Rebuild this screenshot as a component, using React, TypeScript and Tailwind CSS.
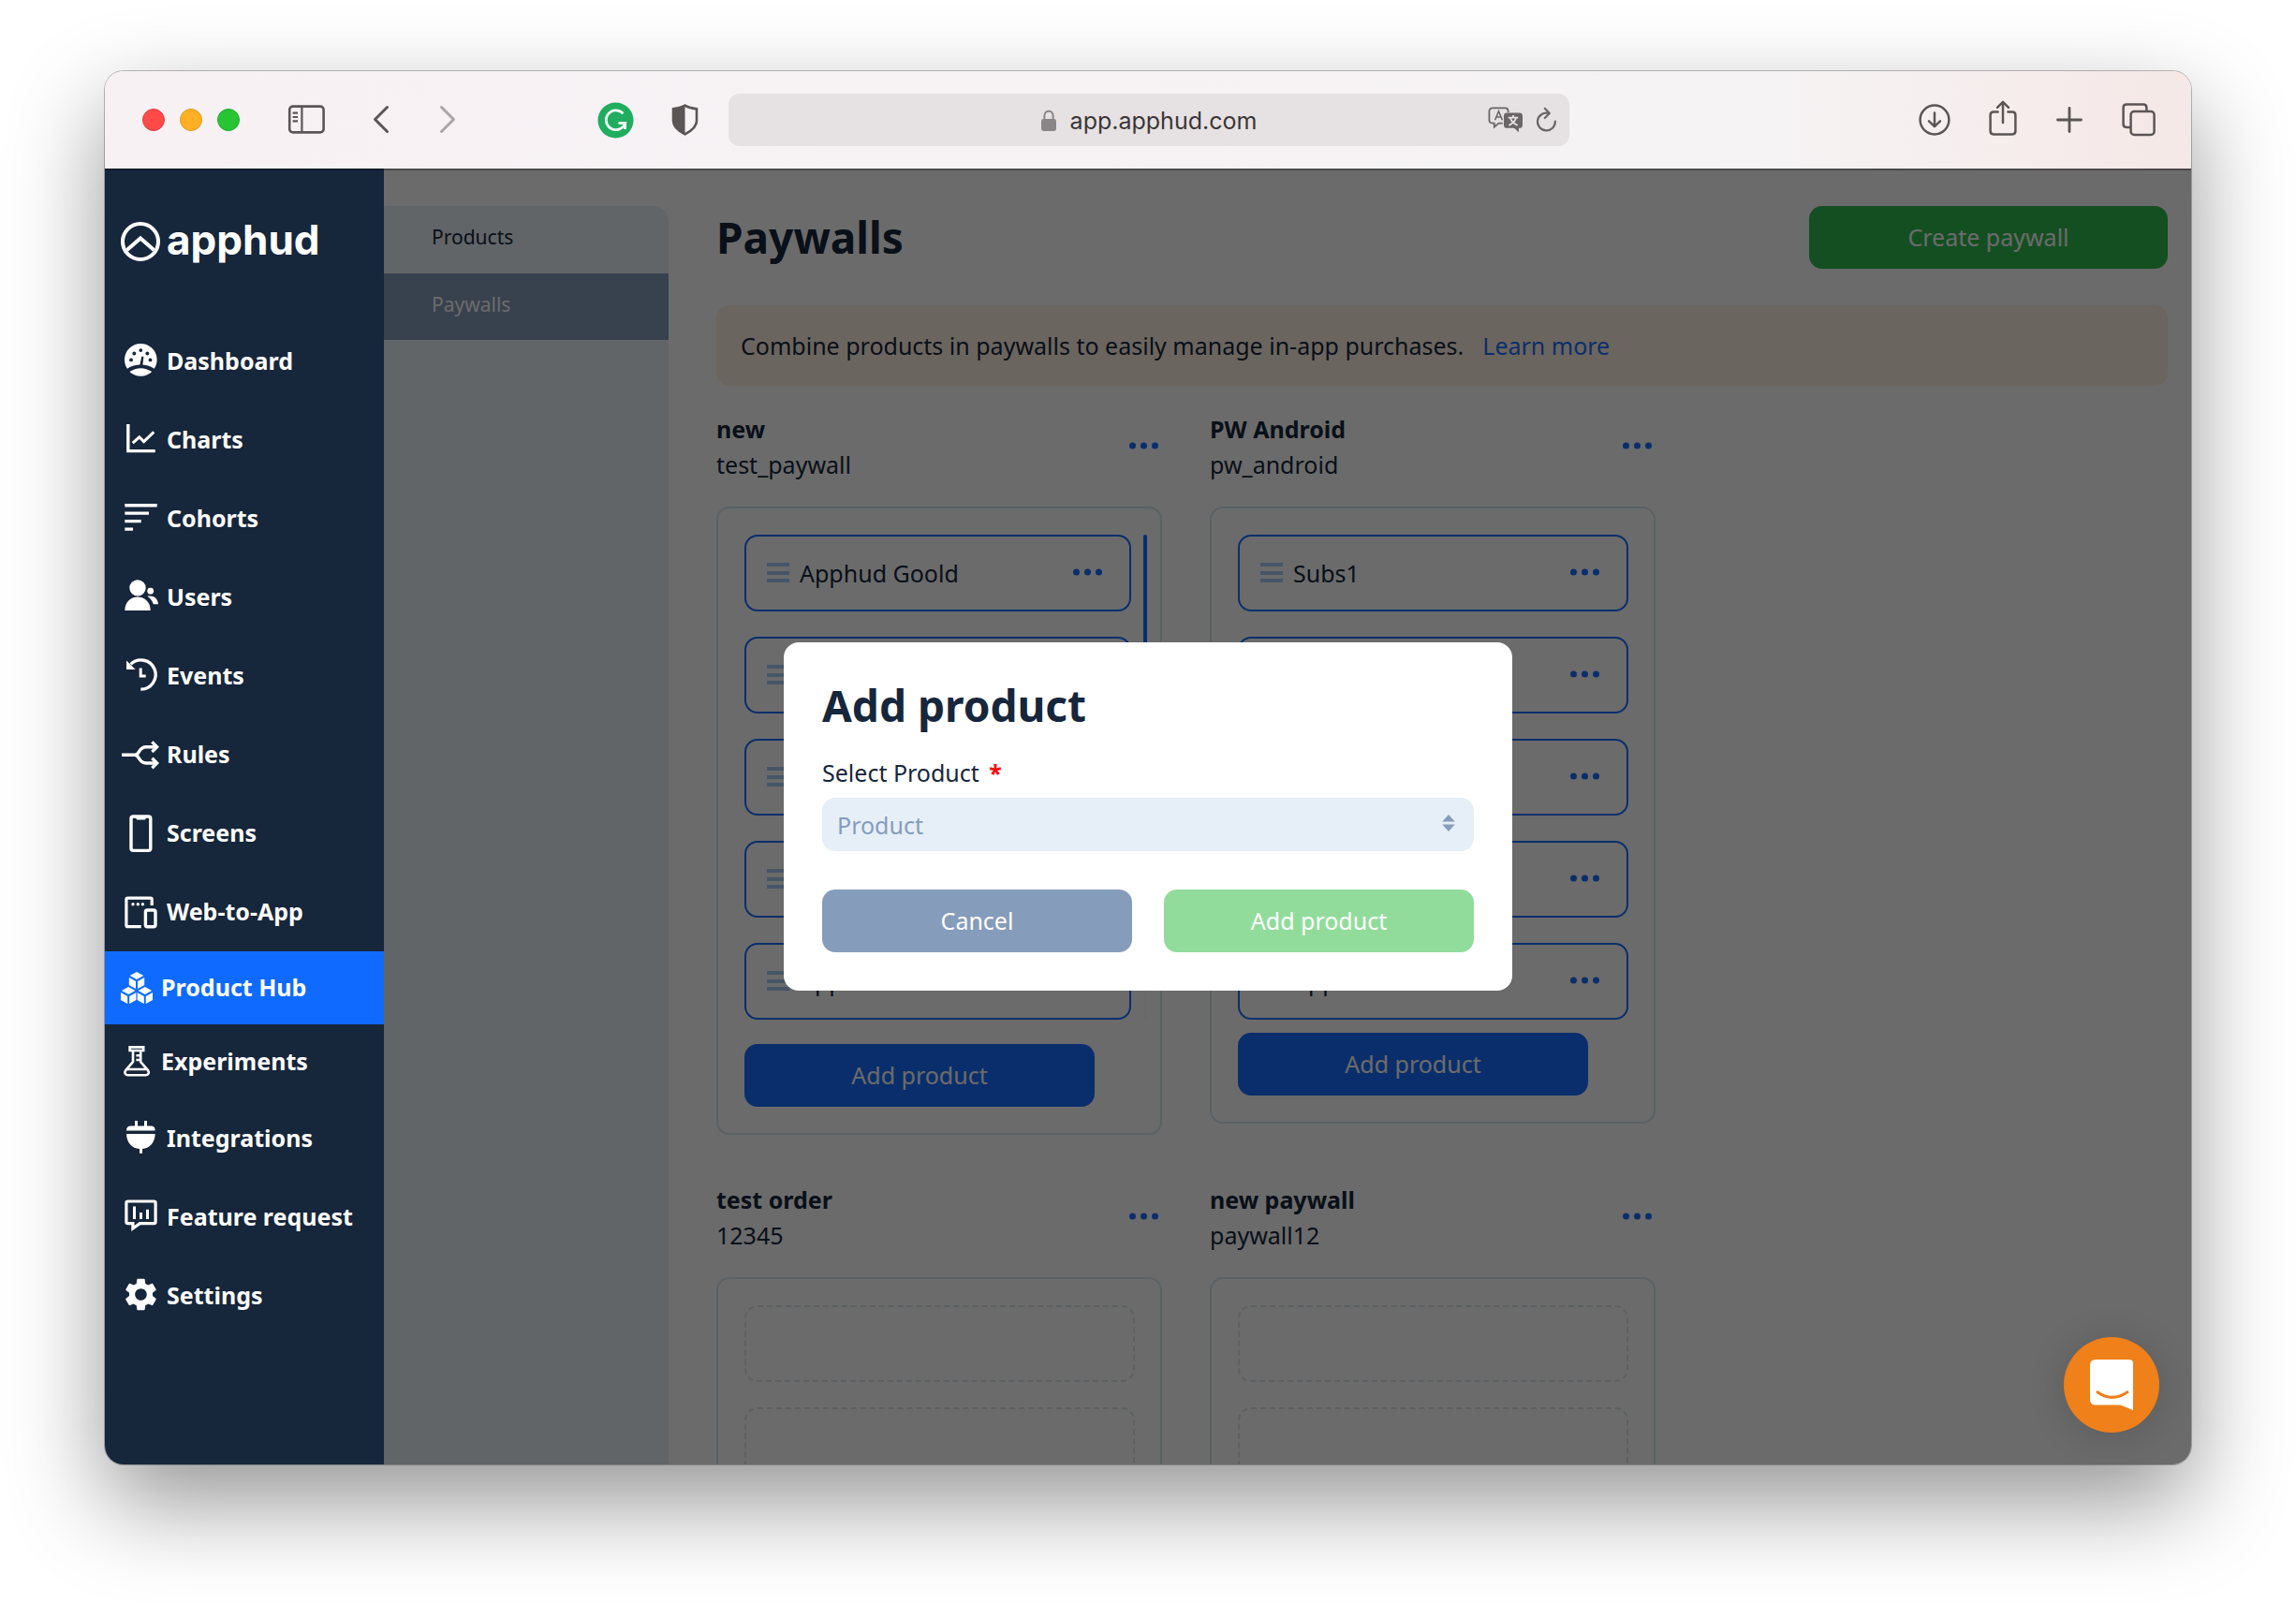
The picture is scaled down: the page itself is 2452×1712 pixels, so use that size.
import { ReactNode } from 'react';

interface NavItem {
  label: string;
  icon: ReactNode;
  active?: boolean;
  compact?: boolean;
}

interface Paywall {
  name: string;
  identifier: string;
  products: string[];
  scrollable?: boolean;
}

/* One isometric box of the Product Hub icon, drawn around its top corner */
function Cube({ x, y }: { x: number; y: number }) {
  return (
    <g transform={`translate(${x} ${y})`}>
      <path d="M0 0 L7.3 4.1 L0 8.2 L-7.3 4.1 Z" />
      <path d="M-8.2 6.2 L-1 10.1 V18.2 L-8.2 14.2 Z" />
      <path d="M8.2 6.2 L1 10.1 V18.2 L8.2 14.2 Z" />
    </g>
  );
}

const navItems: NavItem[] = [
  {
    label: 'Dashboard',
    icon: (
      <>
        <path
          fill="currentColor"
          d="M5.9 27.8 A17.3 17.3 0 1 1 34.7 27.8 Q28 23.6 20.3 23.6 Q12.6 23.6 5.9 27.8 Z M8.3 31 Q14 27.2 20.3 27.2 Q26.6 27.2 32.3 31 Q27 35.7 20.3 35.7 Q13.6 35.7 8.3 31 Z"
        />
        <g fill="#16263b">
          <circle cx="10" cy="18.4" r="1.9" />
          <circle cx="13.3" cy="11.5" r="1.9" />
          <circle cx="20.3" cy="8.1" r="1.9" />
          <circle cx="27.3" cy="11.5" r="1.9" />
          <circle cx="30.5" cy="18.4" r="1.9" />
          <path d="M21.4 14.4 L23.4 14.9 L22.3 24.2 H19.2 Z" />
        </g>
      </>
    ),
  },
  {
    label: 'Charts',
    icon: (
      <g fill="none" stroke="currentColor">
        <path d="M6.8 3 V31.6 H35.7" strokeWidth="3.4" />
        <path d="M11.7 23.2 L18.8 16.8 L23.6 21.6 L34.3 11.4" strokeWidth="3" />
      </g>
    ),
  },
  {
    label: 'Cohorts',
    icon: <path fill="currentColor" d="M3.3 4 H37.7 V7.4 H3.3 Z M3.3 12.4 H29 V15.8 H3.3 Z M3.3 20.9 H20.7 V24.3 H3.3 Z M3.3 29.4 H12 V32.8 H3.3 Z" />,
  },
  {
    label: 'Users',
    icon: (
      <g fill="currentColor">
        <circle cx="17" cy="9.9" r="8.7" />
        <path d="M3.3 34 C3.3 25 9.5 19.4 17 19.4 C24.5 19.4 30.7 25 30.7 34 Z" />
        <circle cx="30.7" cy="13.2" r="3.4" />
        <path d="M27.4 18.8 C34 17.6 38.6 21.2 39 27.2 H33.8 C32.7 23.6 30.6 21.2 27.4 18.8 Z" />
      </g>
    ),
  },
  {
    label: 'Events',
    icon: (
      <>
        <path d="M9.6 7.4 A15.6 15.6 0 1 1 20.3 34.1" fill="none" stroke="currentColor" strokeWidth="3.4" />
        <path fill="currentColor" d="M5 3.4 V13 H14.7 Z M18.7 11.6 H21.7 V18.4 H25.7 V21.6 H18.7 Z" />
      </>
    ),
  },
  {
    label: 'Rules',
    icon: (
      <g fill="none" stroke="currentColor" strokeWidth="3.4">
        <path d="M0 20.3 H14 C19 20.3 18 11.8 26 11.8 H37 M14 20.3 C19 20.3 18 29 26 29 H37" />
        <path d="M32.4 6.4 L37.6 11.7 L32.4 17 M32.4 23.7 L37.6 29 L32.4 34.3" />
      </g>
    ),
  },
  {
    label: 'Screens',
    icon: (
      <>
        <rect x="10" y="2" width="20.8" height="36.4" rx="2.4" fill="none" stroke="currentColor" strokeWidth="3.4" />
        <path fill="currentColor" d="M14.5 3 H26.5 L24.8 5.4 H16.2 Z" />
      </>
    ),
  },
  {
    label: 'Web-to-App',
    icon: (
      <>
        <g fill="none" stroke="currentColor" strokeWidth="3.2">
          <path d="M32.2 13 V6.6 Q32.2 5.1 30.7 5.1 H6.4 Q4.9 5.1 4.9 6.6 V34.2 Q4.9 35.7 6.4 35.7 H20.7" />
          <rect x="25.4" y="18" width="10.6" height="17.7" rx="2" strokeWidth="3.4" />
        </g>
        <g fill="currentColor">
          <circle cx="12" cy="11.7" r="1.7" />
          <circle cx="17.3" cy="11.7" r="1.7" />
          <circle cx="22.4" cy="11.7" r="1.7" />
        </g>
      </>
    ),
  },
  {
    label: 'Product Hub',
    active: true,
    compact: true,
    icon: (
      <g fill="currentColor">
        <Cube x={20} y={2.9} />
        <Cube x={11.2} y={18.9} />
        <Cube x={28.8} y={18.9} />
      </g>
    ),
  },
  {
    label: 'Experiments',
    compact: true,
    icon: (
      <g fill="none" stroke="currentColor" strokeWidth="2.6">
        <path d="M12.6 4.4 H27.2 V8 H12.6 Z" />
        <path d="M16 8 V20 L8 29.4 C6.6 31.4 7.6 34.3 10.4 34.3 H29.8 C32.6 34.3 33.6 31.4 32.2 29.4 L24.2 20 V8" />
        <path d="M9.6 28 H30.6 M19.4 13.2 H24 M19.4 18 H24" />
      </g>
    ),
  },
  {
    label: 'Integrations',
    icon: (
      <g fill="currentColor">
        <path d="M14 1.1 H17 V6.5 H24 V1.1 H27 V6.5 H31 Q35.7 6.5 35.7 11.5 H5 Q5 6.5 9.7 6.5 H14 Z" />
        <path d="M5 15 H35.7 C35.4 24.4 29.4 30.8 22 30.9 V35.8 H19 V30.9 C11.2 30.8 5.3 24.4 5 15 Z" />
      </g>
    ),
  },
  {
    label: 'Feature request',
    icon: (
      <>
        <path
          d="M6.6 3 H34.4 Q36.1 3 36.1 4.7 V24.9 Q36.1 26.6 34.4 26.6 H19.4 L11.9 32 V26.6 H6.6 Q4.9 26.6 4.9 24.9 V4.7 Q4.9 3 6.6 3 Z"
          fill="none"
          stroke="currentColor"
          strokeWidth="3.2"
        />
        <path fill="currentColor" d="M12 8.4 H15 V22 H12 Z M19 15 H22 V22 H19 Z M26 11.8 H29 V22 H26 Z" />
      </>
    ),
  },
  {
    label: 'Settings',
    icon: (
      <path
        transform="translate(-0.4 -2.4) scale(1.74)"
        fill="currentColor"
        d="M19.14 12.94c.04-.3.06-.61.06-.94 0-.32-.02-.64-.07-.94l2.03-1.58c.18-.14.23-.41.12-.61l-1.92-3.32c-.12-.22-.37-.29-.59-.22l-2.39.96c-.5-.38-1.03-.7-1.62-.94l-.36-2.54c-.04-.24-.24-.41-.48-.41h-3.84c-.24 0-.43.17-.47.41l-.36 2.54c-.59.24-1.13.57-1.62.94l-2.39-.96c-.22-.08-.47 0-.59.22L2.74 8.87c-.12.21-.08.47.12.61l2.03 1.58c-.05.3-.09.63-.09.94s.02.64.07.94l-2.03 1.58c-.18.14-.23.41-.12.61l1.92 3.32c.12.22.37.29.59.22l2.39-.96c.5.38 1.03.7 1.62.94l.36 2.54c.05.24.24.41.48.41h3.84c.24 0 .44-.17.47-.41l.36-2.54c.59-.24 1.13-.56 1.62-.94l2.39.96c.22.08.47 0 .59-.22l1.92-3.32c.12-.22.07-.47-.12-.61l-2.01-1.58zM12 15.6c-1.98 0-3.6-1.62-3.6-3.6s1.62-3.6 3.6-3.6 3.6 1.62 3.6 3.6-1.62 3.6-3.6 3.6z"
      />
    ),
  },
];

const paywalls: Paywall[] = [
  {
    name: 'new',
    identifier: 'test_paywall',
    products: ['Apphud Goold', '', '', '', 'Apphud Free'],
    scrollable: true,
  },
  { name: 'PW Android', identifier: 'pw_android', products: ['Subs1', '', '', '', 'Apple'] },
  { name: 'test order', identifier: '12345', products: [] },
  { name: 'new paywall', identifier: 'paywall12', products: [] },
];

function DotsButton({ label }: { label: string }) {
  return (
    <button type="button" aria-label={label} className="cursor-pointer pb-0.5 text-[#1a6fff]">
      <svg width="31" height="8" viewBox="0 0 31 8" fill="currentColor">
        <circle cx="3.5" cy="4" r="3.5" />
        <circle cx="15.5" cy="4" r="3.5" />
        <circle cx="27.5" cy="4" r="3.5" />
      </svg>
    </button>
  );
}

function BrowserBar() {
  return (
    <header className="flex h-26 shrink-0 items-center bg-linear-to-r from-[#f7f1f4] via-[#f6f3f4] via-80% to-[#f5e8e6] pr-[38px] pl-10 text-[#5b5556]">
      <div className="flex flex-1 items-center">
        <div className="flex gap-4">
          <span className="size-6 rounded-full border border-[#e33e3b] bg-[#ff4a48]" />
          <span className="size-6 rounded-full border border-[#e09a1f] bg-[#ffb024]" />
          <span className="size-6 rounded-full border border-[#1fae2b] bg-[#27c433]" />
        </div>
        <button type="button" aria-label="Show sidebar" className="ml-[51px]">
          <svg width="41" height="32" viewBox="0 0 41 32" fill="none" stroke="currentColor">
            <rect x="2.2" y="1.6" width="36.4" height="27.8" rx="3.6" strokeWidth="2.6" />
            <path d="M15.4 2 V29 M5.6 8.6 H11 M5.6 13 H11 M5.6 17.4 H11" strokeWidth="2.2" />
          </svg>
        </button>
        <button type="button" aria-label="Back" className="ml-[49px]">
          <svg width="20" height="32" viewBox="0 0 20 32" fill="none" stroke="currentColor" strokeWidth="3" strokeLinecap="round" strokeLinejoin="round">
            <path d="M16.5 2.5 L3.5 15.5 L16.5 28.5" />
          </svg>
        </button>
        <button type="button" aria-label="Forward" className="ml-[51px] text-[#aaa5a7]">
          <svg width="20" height="32" viewBox="0 0 20 32" fill="none" stroke="currentColor" strokeWidth="3" strokeLinecap="round" strokeLinejoin="round">
            <path d="M3.5 2.5 L16.5 15.5 L3.5 28.5" />
          </svg>
        </button>
        <div className="mr-8 ml-auto flex items-center gap-10">
          <svg width="39" height="39" viewBox="0 0 39 39" fill="none">
            <circle cx="19.5" cy="19.5" r="19" fill="#20ad5f" />
            <path d="M27.4 12.2 A10.4 10.4 0 1 0 29.6 22.4 H22.4 M29.6 22.4 V29" stroke="#f4fbf6" strokeWidth="2.8" />
          </svg>
          <svg width="29" height="34" viewBox="0 0 29 34" fill="none">
            <path d="M14.5 1.6 C11 3.8 6.6 4.6 2 5.4 V18 C2 25 8 29 14.5 32.4 C21 29 27 25 27 18 V5.4 C22.4 4.6 18 3.8 14.5 1.6 Z" stroke="currentColor" strokeWidth="2.6" />
            <path d="M14.5 1.6 C11 3.8 6.6 4.6 2 5.4 V18 C2 25 8 29 14.5 32.4 Z" fill="currentColor" />
          </svg>
        </div>
      </div>

      <div className="flex h-14 w-[898px] items-center rounded-xl bg-[#e6e1e2] pr-[13px] pl-[86px]">
        <div className="flex flex-1 items-center justify-center gap-3.5 pt-0.5">
          <svg width="18" height="24" viewBox="0 0 18 24" className="text-[#8a8586]">
            <rect x="1" y="10" width="16" height="13" rx="2.4" fill="currentColor" />
            <path d="M4.4 11 V6.6 C4.4 0.2 13.6 0.2 13.6 6.6 V11" fill="none" stroke="currentColor" strokeWidth="2" />
          </svg>
          <span className="font-['Inter'] text-[25px] leading-8 text-[#3a3637]">app.apphud.com</span>
        </div>
        <button type="button" aria-label="Translate page">
          <svg width="38" height="28" viewBox="0 0 38 28" fill="none">
            <path d="M5 1.4 H18.4 Q21.6 1.4 21.6 4.6 V6 M15.8 17.6 H11.6 L6.8 21.6 V17.6 H5 Q1.4 17.6 1.4 14 V5 Q1.4 1.4 5 1.4" stroke="#6a6566" strokeWidth="1.8" />
            <path d="M7.6 14.2 L11.5 4.8 L15.4 14.2 M9 11 H14" stroke="#6a6566" strokeWidth="1.6" />
            <path d="M20.4 6.4 H33.6 Q37 6.4 37 9.8 V19.4 Q37 22.8 33.6 22.8 H33 V27.2 L28 22.8 H20.4 Q17 22.8 17 19.4 V9.8 Q17 6.4 20.4 6.4 Z" fill="#6a6566" />
            <path d="M21.8 11.6 H32.2 M27 9 V11.6 M30.2 11.6 C29 15.6 26 18.4 22.4 19.8 M23.8 11.6 C25 15.6 28 18.4 31.6 19.8" stroke="#e6e1e2" strokeWidth="1.8" />
          </svg>
        </button>
        <button type="button" aria-label="Reload page" className="ml-[13px]">
          <svg width="23" height="28" viewBox="0 0 23 28" fill="none" stroke="#6a6566" strokeWidth="2.2" strokeLinecap="round" strokeLinejoin="round">
            <path d="M13.6 6.9 A9.4 9.4 0 1 0 20.8 15.6 M9.8 1.8 L14.8 6.9 L9.8 12" />
          </svg>
        </button>
      </div>

      <div className="flex flex-1 items-center justify-end">
        <button type="button" aria-label="Downloads">
          <svg width="34" height="34" viewBox="0 0 34 34" fill="none" stroke="currentColor" strokeWidth="2.5" strokeLinecap="round" strokeLinejoin="round">
            <circle cx="17" cy="17" r="15.4" />
            <path d="M17 9.4 V24 M11 18.4 L17 24.2 L23 18.4" />
          </svg>
        </button>
        <button type="button" aria-label="Share" className="ml-[41px] pb-1">
          <svg width="30" height="38" viewBox="0 0 30 38" fill="none" stroke="currentColor" strokeWidth="2.5" strokeLinecap="round" strokeLinejoin="round">
            <path d="M9.6 12.6 H5 Q1.6 12.6 1.6 16 V33 Q1.6 36.4 5 36.4 H25 Q28.4 36.4 28.4 33 V16 Q28.4 12.6 25 12.6 H20.4 M15 24 V2 M9 7.8 L15 1.8 L21 7.8" />
          </svg>
        </button>
        <button type="button" aria-label="New tab" className="ml-[42px]">
          <svg width="28" height="28" viewBox="0 0 28 28" fill="none" stroke="currentColor" strokeWidth="2.8" strokeLinecap="round">
            <path d="M14 1.5 V26.5 M1.5 14 H26.5" />
          </svg>
        </button>
        <button type="button" aria-label="Show tab overview" className="ml-[42px]">
          <svg width="36" height="36" viewBox="0 0 36 36" fill="none" stroke="currentColor" strokeWidth="2.5">
            <rect x="9.6" y="9" width="25" height="25" rx="3.6" />
            <path d="M9.6 26 H5 Q1.6 26 1.6 22.6 V5 Q1.6 1.6 5 1.6 H23 Q26.4 1.6 26.4 5 V9" />
          </svg>
        </button>
      </div>
    </header>
  );
}

function Sidebar() {
  return (
    <aside className="w-[298px] shrink-0 bg-[#16263b] text-white">
      {/* Brand */}
      <a href="#" className="flex items-center gap-1.5 pt-14 pl-4">
        <svg width="44" height="44" viewBox="0 0 44 44" fill="none" stroke="currentColor" strokeWidth="4">
          <circle cx="22" cy="22" r="19" />
          <path d="M7.6 31 L22 18.4 L36.4 31" />
        </svg>
        <span className="pb-1 font-['Inter'] text-[44px] leading-10 font-bold">apphud</span>
      </a>

      {/* Navigation */}
      <nav className="mt-16">
        {navItems.map((item) => (
          <a
            key={item.label}
            href="#"
            className={`flex items-center text-[25px] leading-8 font-bold ${item.compact ? 'gap-1.5 pl-3.5' : 'h-21 gap-2 pl-[18px]'} ${
              item.active ? 'h-[78px] bg-[#0f6bff]' : ''
            } ${item.compact && !item.active ? 'h-20' : ''}`}
          >
            <svg width="40" height="40" viewBox="0 0 40 40" className="shrink-0 overflow-visible">
              {item.icon}
            </svg>
            <span className="pb-0.5">{item.label}</span>
          </a>
        ))}
      </nav>
    </aside>
  );
}

function ProductRow({ name }: { name: string }) {
  return (
    <li className="flex h-[82px] items-center rounded-[14px] border-2 border-[#1a6fff] pr-[29px] pl-[22px]">
      <svg width="24" height="22" viewBox="0 0 24 22" fill="#a5cdf5" className="mr-[11px]">
        <path d="M0 0 H24 V4 H0 Z M0 9 H24 V13 H0 Z M0 17 H24 V21 H0 Z" />
      </svg>
      <span className="flex-1 leading-8">{name}</span>
      <DotsButton label="Product actions" />
    </li>
  );
}

function PaywallCard({ paywall }: { paywall: Paywall }) {
  return (
    <section>
      <div className="flex items-center justify-between pr-1">
        <div className="leading-[38px]">
          <h2 className="font-bold">{paywall.name}</h2>
          <p>{paywall.identifier}</p>
        </div>
        <DotsButton label="Paywall actions" />
      </div>

      <div className={`mt-[26px] rounded-[14px] border-2 border-[#d9e6ef] py-7 pl-7 ${paywall.scrollable ? 'pr-3.5' : 'pr-[27px]'}`}>
        {paywall.products.length > 0 ? (
          <>
            <div className="flex gap-[13px]">
              <ul className="flex flex-1 flex-col gap-[27px]">
                {paywall.products.map((name, i) => (
                  <ProductRow key={i} name={name} />
                ))}
              </ul>
              {paywall.scrollable && (
                <div className="w-1 rounded-full bg-[#fafafa]">
                  <div className="h-4/5 rounded-full bg-[#1a6fff]" />
                </div>
              )}
            </div>
            <button type="button" className={`h-[67px] w-[374px] cursor-pointer rounded-[14px] bg-[#1a6fff] text-white ${paywall.scrollable ? 'mt-[26px]' : 'mt-3.5'}`}>
              Add product
            </button>
          </>
        ) : (
          <div className="flex flex-col gap-[27px]">
            {[0, 1, 2, 3, 4].map((slot) => (
              <div key={slot} className="h-[82px] rounded-[14px] border-2 border-dashed border-[#dce4e9]" />
            ))}
          </div>
        )}
      </div>
    </section>
  );
}

function AddProductModal() {
  return (
    <div role="dialog" aria-labelledby="add-product-title" className="w-[778px] rounded-2xl bg-white px-[41px] pt-[37px] pb-[41px]">
      <h2 id="add-product-title" className="text-[46px] leading-[60px] font-bold">
        Add product
      </h2>
      <form>
        <label htmlFor="product" className="mt-[26px] block leading-8">
          Select Product <span className="ml-1 font-bold text-[#fb0007]">*</span>
        </label>
        <div className="relative mt-[11px]">
          <select id="product" defaultValue="" className="h-[57px] w-full appearance-none rounded-[14px] bg-[#e6eff7] px-4 pt-0.5 text-[#869cbb]">
            <option value="">Product</option>
          </select>
          <svg width="14" height="18" viewBox="0 0 14 18" fill="#869cbb" className="pointer-events-none absolute top-[18px] right-5">
            <path d="M7 0 L13.8 7.4 H0.2 Z M7 18 L13.8 10.6 H0.2 Z" />
          </svg>
        </div>
        <div className="mt-[41px] grid grid-cols-2 gap-[34px] text-white">
          <button type="button" className="h-[67px] cursor-pointer rounded-[14px] bg-[#869cbb]">
            Cancel
          </button>
          <button type="submit" className="h-[67px] cursor-pointer rounded-[14px] bg-[#92dc9b]">
            Add product
          </button>
        </div>
      </form>
    </div>
  );
}

export default function App() {
  return (
    <div className="flex h-screen flex-col bg-white px-28 pt-[76px] pb-[148px] font-['Noto_Sans',sans-serif] text-[25px] text-[#16263b]">
      <div className="flex min-h-0 flex-1 flex-col overflow-hidden rounded-[20px] shadow-[0_0_0_1px_rgba(0,0,0,0.25),0_40px_100px_rgba(0,0,0,0.42)]">
        <BrowserBar />

        <div className="relative flex min-h-0 flex-1">
          <Sidebar />

          <div className="relative flex min-w-0 flex-1 overflow-hidden bg-white">
            {/* Section menu */}
            <nav className="mt-10 w-[304px] shrink-0 overflow-hidden rounded-tr-2xl bg-[#e8f1f6] text-[21px]">
              <a href="#" className="flex h-[72px] items-center pb-1 pl-[51px]">
                Products
              </a>
              <a href="#" className="flex h-[71px] items-center bg-[#869cbb] pb-1 pl-[51px] text-white">
                Paywalls
              </a>
            </nav>

            <main className="min-w-0 flex-1 pt-10 pr-[25px] pl-[51px]">
              <div className="flex items-center justify-between">
                <h1 className="text-[46px] leading-[67px] font-bold">Paywalls</h1>
                <button type="button" className="h-[67px] w-[383px] cursor-pointer rounded-[14px] bg-[#30bc4f] text-white">
                  Create paywall
                </button>
              </div>

              <p className="mt-[39px] flex h-[86px] items-center gap-5 rounded-[14px] bg-[#fff1e2] px-[26px] pt-0.5">
                Combine products in paywalls to easily manage in-app purchases.
                <a href="#" className="text-[#1a6fff]">
                  Learn more
                </a>
              </p>

              <div className="mt-[27px] grid grid-cols-[repeat(2,476px)] items-start gap-x-[51px] gap-y-[50px]">
                {paywalls.map((paywall) => (
                  <PaywallCard key={paywall.identifier} paywall={paywall} />
                ))}
              </div>
            </main>

            {/* Backdrop */}
            <div className="absolute inset-0 bg-black/58" />
          </div>

          <div className="absolute inset-0 flex items-center justify-center shadow-[inset_0_2px_0_rgba(0,0,0,0.3)]">
            <AddProductModal />
          </div>

          <button
            type="button"
            aria-label="Open chat"
            className="absolute right-[34px] bottom-[34px] size-[102px] cursor-pointer rounded-full bg-[#f08019] shadow-[0_4px_40px_rgba(0,0,0,0.15)]"
          >
            <svg viewBox="0 0 102 102" className="size-full">
              <path d="M34 24 H70 Q74 24 74 28 V78 L60.5 72.5 H34 Q28 72.5 28 66.5 V30 Q28 24 34 24 Z" fill="#fff" />
              <path d="M36 58.8 Q51.5 70 68 58.8" fill="none" stroke="#f08019" strokeWidth="3" strokeLinecap="round" />
            </svg>
          </button>
        </div>
      </div>
    </div>
  );
}
